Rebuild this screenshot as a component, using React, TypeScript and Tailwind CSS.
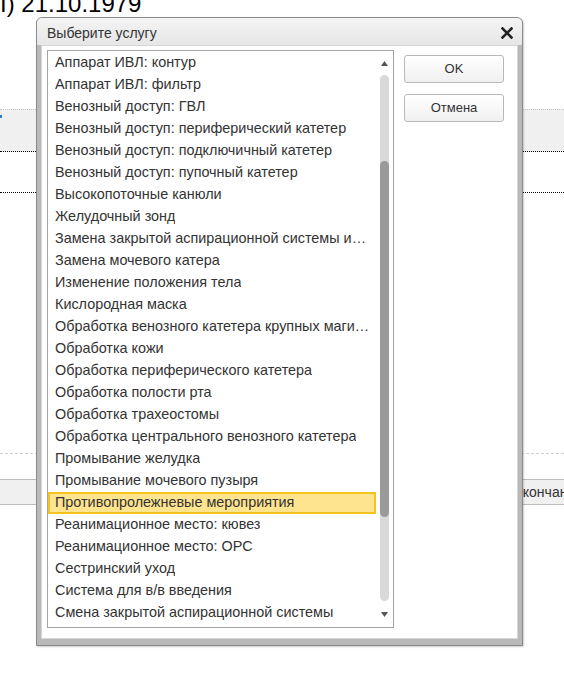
import React from "react";

const items = [
  "Аппарат ИВЛ: контур",
  "Аппарат ИВЛ: фильтр",
  "Венозный доступ: ГВЛ",
  "Венозный доступ: периферический катетер",
  "Венозный доступ: подключичный катетер",
  "Венозный доступ: пупочный катетер",
  "Высокопоточные канюли",
  "Желудочный зонд",
  "Замена закрытой аспирационной системы и уход за ней",
  "Замена мочевого катера",
  "Изменение положения тела",
  "Кислородная маска",
  "Обработка венозного катетера крупных магистральных сосудов",
  "Обработка кожи",
  "Обработка периферического катетера",
  "Обработка полости рта",
  "Обработка трахеостомы",
  "Обработка центрального венозного катетера",
  "Промывание желудка",
  "Промывание мочевого пузыря",
  "Противопролежневые мероприятия",
  "Реанимационное место: кювез",
  "Реанимационное место: ОРС",
  "Сестринский уход",
  "Система для в/в введения",
  "Смена закрытой аспирационной системы",
];

const selected = 20;

function Background() {
  return (
    <div className="flex flex-col">
      <div className="text-[24px] leading-none -mt-[8px] text-black whitespace-nowrap">I) 21.10.1979</div>
      <div className="mt-[93px] border-t border-[#c4c4c4] bg-[#f0f0f0] h-[43px] border-b border-b-black border-dotted">
        <div className="w-[2px] h-[3px] mt-[5px] bg-[#2d7fd6]" />
      </div>
      <div className="h-[41px] border-b border-black border-dotted" />
      <div className="h-[261px] border-b border-dashed border-[#d0d0d0]" />
      <div className="h-[25px]" />
      <div className="border-t border-[#bdbdbd] bg-[#f0f0f0] h-[26px] border-b flex items-center pl-[515px]">
        <span className="text-[14px] text-[#333] whitespace-nowrap">окончания</span>
      </div>
    </div>
  );
}

function Dialog() {
  return (
    <div className="absolute left-[36px] top-[17px] w-[487px] h-[629px] rounded-t-[6px] border border-[#8a8a8a] bg-[#b9b9b9] flex flex-col overflow-hidden shadow-[1px_1px_2px_rgba(0,0,0,0.2)]">
      <div className="h-[27px] bg-gradient-to-b from-[#f4f4f4] to-[#e6e6e6] flex items-center justify-between pl-[10px] pr-[9px] shrink-0">
        <span className="text-[14px] text-[#333] mt-[3px]">Выберите услугу</span>
        <svg width="12" height="12" viewBox="0 0 12 12" className="mt-[2px]">
          <path d="M1.5 1.5 L10.5 10.5 M10.5 1.5 L1.5 10.5" stroke="#222" strokeWidth="2.6" strokeLinecap="square" />
        </svg>
      </div>
      <div className="flex-1 mx-[4px] mb-[6px] border border-[#d6d6d6] bg-white flex pt-[4px] pl-[5px] gap-[10px]">
        <div className="w-[347px] h-[578px] border border-[#a3a3a3] flex">
          <div className="flex-1 flex flex-col min-w-0 pt-[1px]">
            {items.map((t, i) => (
              <div
                key={t}
                className={
                  i === selected
                    ? "h-[22px] flex items-center pl-[5px] pr-[4px] bg-[#fee48e] border-2 border-[#f4c41c] text-[14.4px] text-[#333] whitespace-nowrap overflow-hidden"
                    : "h-[22px] flex items-center pl-[7px] pr-[6px] text-[14.4px] text-[#333] whitespace-nowrap overflow-hidden"
                }
              >
                <span className="truncate">{t}</span>
              </div>
            ))}
          </div>
          <div className="w-[16px] flex flex-col items-center pt-[10px] pb-[10px] mr-[1px]">
            <svg width="7" height="5" viewBox="0 0 7 5">
              <path d="M0 5 L3.5 0 L7 5 Z" fill="#555" />
            </svg>
            <div className="mt-[9px] w-[9px] flex-1 rounded-full bg-[#d9d9d9] flex flex-col">
              <div className="h-[86px]" />
              <div className="h-[356px] rounded-full bg-[#9a9a9a]" />
            </div>
            <svg width="7" height="5" viewBox="0 0 7 5" className="mt-[11px]">
              <path d="M0 0 L7 0 L3.5 5 Z" fill="#555" />
            </svg>
          </div>
        </div>
        <div className="flex flex-col gap-[11px] pt-[5px]">
          <button className="w-[100px] h-[28px] rounded-[3px] border border-[#b8b8b8] bg-gradient-to-b from-white to-[#f0f0f0] text-[13px] text-[#333]">
            OK
          </button>
          <button className="w-[100px] h-[28px] rounded-[3px] border border-[#b8b8b8] bg-gradient-to-b from-white to-[#f0f0f0] text-[13px] text-[#333]">
            Отмена
          </button>
        </div>
      </div>
    </div>
  );
}

export default function App() {
  return (
    <div className="relative w-[564px] h-[694px] bg-white overflow-hidden font-['Liberation_Sans',Arial,sans-serif]">
      <Background />
      <Dialog />
    </div>
  );
}
